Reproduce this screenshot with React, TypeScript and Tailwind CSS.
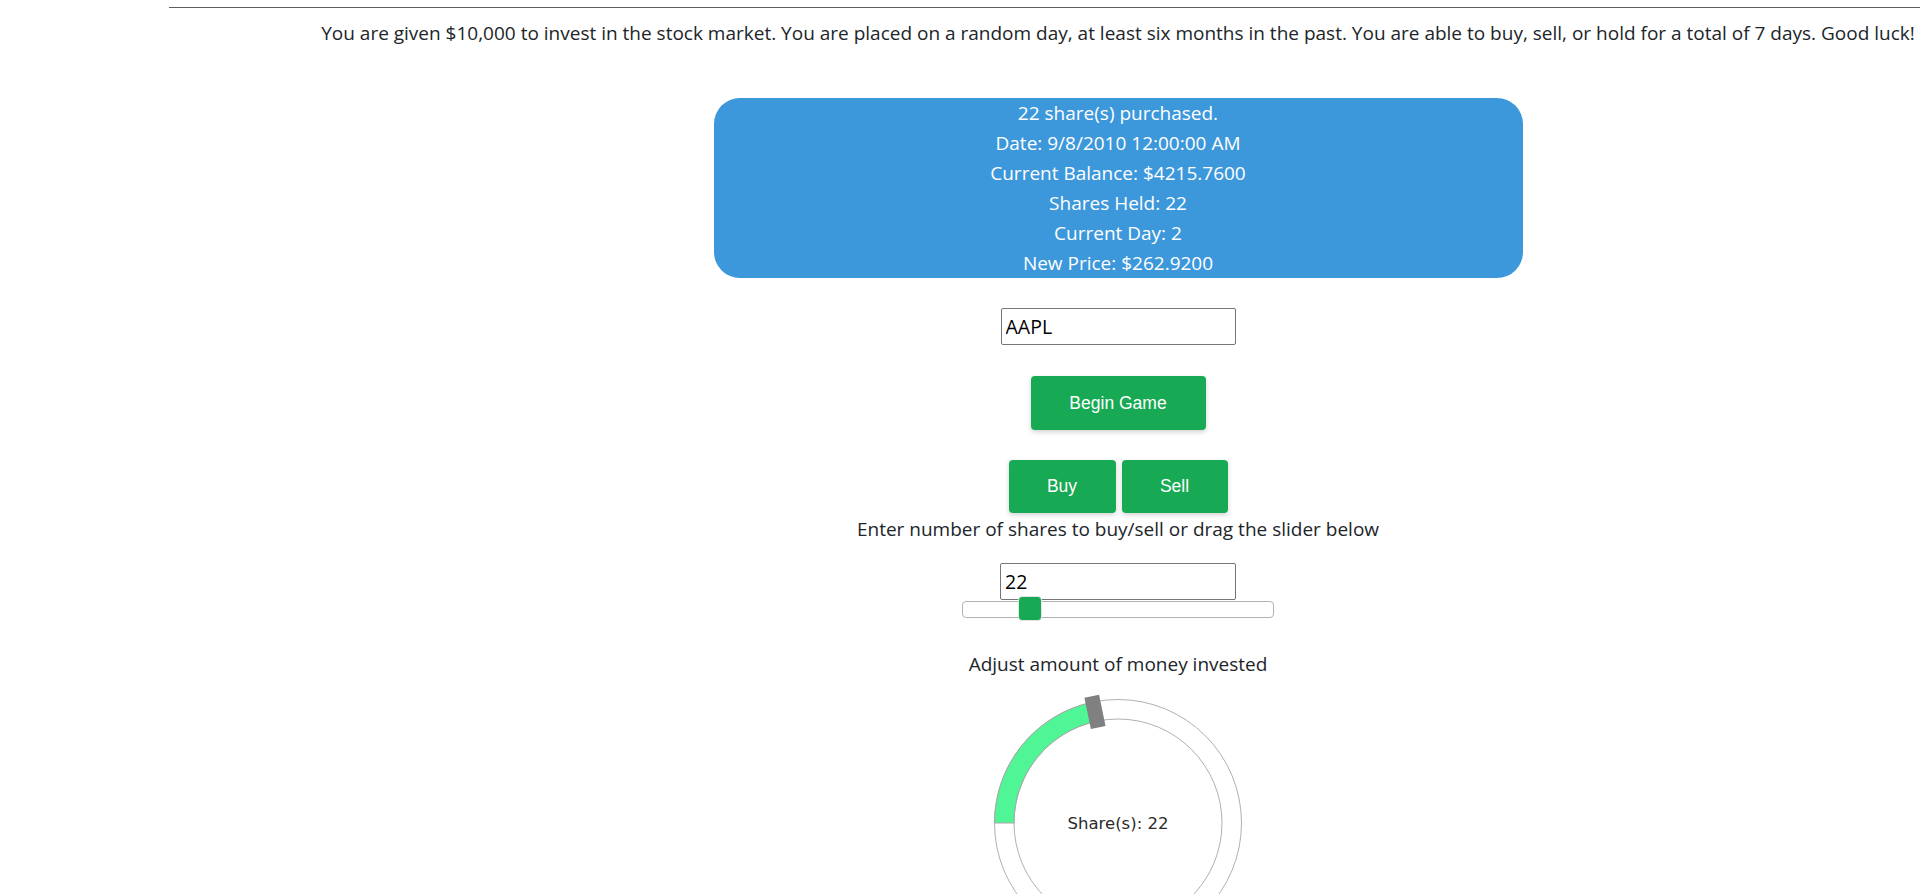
import React from "react"

const lines = [
  "22 share(s) purchased.",
  "Date: 9/8/2010 12:00:00 AM",
  "Current Balance: $4215.7600",
  "Shares Held: 22",
  "Current Day: 2",
  "New Price: $262.9200",
]

function GreenButton({ label, className }: { label: string; className: string }) {
  return (
    <button
      className={
        "bg-[#17a954] text-white rounded-[4px] font-['Liberation_Sans',Arial,sans-serif] text-[17.5px] shadow-[0_2px_5px_rgba(0,0,0,0.18)] " +
        className
      }
    >
      {label}
    </button>
  )
}

function InvestDial() {
  // annular sector from 9 o'clock up to the handle
  const arc =
    "M 6.5 130 A 123.5 123.5 0 0 1 104.95 9.07 L 108.91 28.16 A 104 104 0 0 0 26 130 Z"
  return (
    <svg width="260" height="260" viewBox="0 0 260 260" className="mt-[14px] shrink-0">
      <circle cx="130" cy="130" r="123.5" fill="none" stroke="#b0b0b0" strokeWidth="1" />
      <circle cx="130" cy="130" r="104" fill="none" stroke="#b0b0b0" strokeWidth="1" />
      <path d={arc} fill="#50f595" stroke="#a8a8a8" strokeWidth="1" />
      <rect
        x="99.48"
        y="2.86"
        width="15"
        height="32"
        fill="#808080"
        transform="rotate(-11.7 106.98 18.86)"
      />
      <text
        x="130"
        y="130"
        textAnchor="middle"
        dominantBaseline="central"
        fontFamily="'DejaVu Sans', Verdana, sans-serif"
        fontSize="16.5"
        fill="#2a2a2a"
      >
        Share(s): 22
      </text>
    </svg>
  )
}

export default function App() {
  return (
    <div className="h-screen overflow-hidden bg-white font-['Open_Sans',sans-serif] text-[#212529]">
      <div className="ml-[169px] w-[1898px] flex flex-col items-center">
        <div className="w-full border-t border-[#5f5f5f] mt-[7px]" />
        <p className="mt-[10px] text-[19px] leading-[30px] text-center whitespace-nowrap">
          You are given $10,000 to invest in the stock market. You are placed on a random day, at least six months in
          the past. You are able to buy, sell, or hold for a total of 7 days. Good luck!
        </p>

        <div className="mt-[50px] w-[809px] rounded-[26px] bg-[#3c98db] text-white text-center text-[19px]">
          {lines.map((l) => (
            <div key={l} className="leading-[30px]">
              {l}
            </div>
          ))}
        </div>

        <input
          defaultValue="AAPL"
          className="mt-[30px] w-[235px] h-[37px] border border-[#767676] rounded-[2px] px-[4px] text-[19.5px] text-black outline-none"
        />

        <GreenButton label="Begin Game" className="mt-[31px] w-[175px] h-[54px]" />

        <div className="mt-[30px] flex gap-[6px]">
          <GreenButton label="Buy" className="w-[107px] h-[53px]" />
          <GreenButton label="Sell" className="w-[106px] h-[53px]" />
        </div>

        <p className="mt-[1px] text-[19px] leading-[30px]">
          Enter number of shares to buy/sell or drag the slider below
        </p>

        <input
          defaultValue="22"
          className="mt-[19px] w-[236px] h-[37px] border border-[#767676] rounded-[2px] px-[4px] text-[19.5px] text-black outline-none"
        />

        <div className="relative mt-[1px] w-[312px] h-[17px] rounded-[4px] border border-[#b3b3b3] bg-white">
          <div className="absolute left-[55px] top-[-6px] w-[24px] h-[25px] rounded-[4px] bg-[#17a954] border border-[#e5e5e5]" />
        </div>

        <p className="mt-[31px] text-[19px] leading-[30px]">Adjust amount of money invested</p>

        <InvestDial />
      </div>
    </div>
  )
}
